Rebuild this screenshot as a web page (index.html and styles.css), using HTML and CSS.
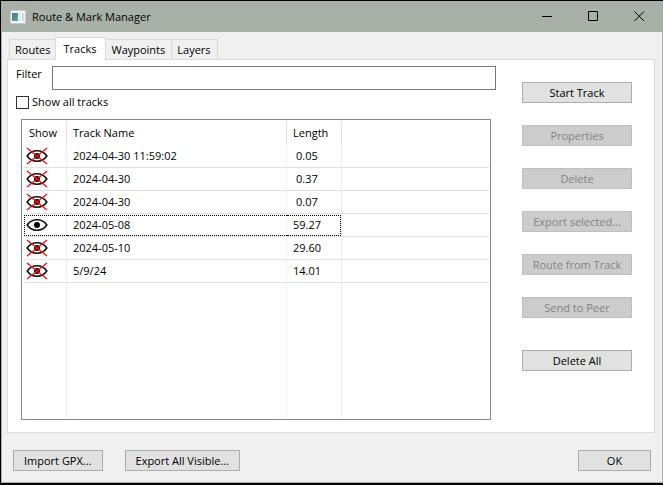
FILE: index.html
```html
<!DOCTYPE html>
<html lang="en">
<head>
<meta charset="utf-8">
<title>Route &amp; Mark Manager</title>
<link rel="stylesheet" href="styles.css">
</head>
<body>
<svg class="defs" aria-hidden="true">
  <symbol id="eye" viewBox="0 0 22 18">
    <path d="M1.2 9C3.5 5.6 7 3.8 11 3.8S18.500 5.600 20.800 9C18.500 12.400 15 14.200 11 14.200S3.500 12.400 1.200 9Z" fill="#fff" stroke="#111" stroke-width="1.6"/>
    <circle cx="11" cy="9" r="3" fill="#000"/>
  </symbol>
  <symbol id="eye-off" viewBox="0 0 22 18">
    <use href="#eye"/>
    <path d="M1 1L21 17M21 1L1 17" fill="none" stroke="#fa1010" stroke-width="1.400"/>
  </symbol>
</svg>
<div class="window">
  <header class="titlebar">
    <svg class="app-icon" width="16" height="14" viewBox="0 0 16 14" aria-hidden="true">
      <defs>
        <linearGradient id="screen" x1="0" y1="0" x2="1" y2="1">
          <stop offset="0" stop-color="#3f74a8"/>
          <stop offset="1" stop-color="#5fae7c"/>
        </linearGradient>
      </defs>
      <rect x="0.500" y="0.500" width="15" height="13" rx="1" fill="#f4f6f6" stroke="#c3c9cc"/>
      <rect x="2" y="3" width="6" height="8" fill="url(#screen)"/>
      <rect x="9" y="3" width="2" height="8" fill="#dfe5e8"/>
      <rect x="12" y="3" width="2" height="8" fill="#d0d7db"/>
    </svg>
    <h1>Route &amp; Mark Manager</h1>
    <div class="caption-buttons">
      <button type="button" aria-label="Minimize"><svg width="11" height="11" viewBox="0 0 11 11"><path d="M0 5.500H10"/></svg></button>
      <button type="button" aria-label="Maximize"><svg width="11" height="11" viewBox="0 0 11 11"><path d="M.5 .5H9.500V9.500H.5Z"/></svg></button>
      <button type="button" aria-label="Close"><svg width="11" height="11" viewBox="0 0 11 11"><path d="M.5 .5L10 10M10 .5L.5 10"/></svg></button>
    </div>
  </header>
  <main class="content">
    <div class="tabs" role="tablist">
      <button type="button" role="tab" class="tab">Routes</button>
      <button type="button" role="tab" class="tab active" aria-selected="true">Tracks</button>
      <button type="button" role="tab" class="tab">Waypoints</button>
      <button type="button" role="tab" class="tab">Layers</button>
    </div>
    <section class="panel" role="tabpanel">
      <div class="tracks">
        <div class="filter">
          <label for="filter">Filter</label>
          <input type="text" id="filter">
        </div>
        <div class="show-all">
          <input type="checkbox" id="show-all">
          <label for="show-all">Show all tracks</label>
        </div>
        <div class="list">
          <table>
            <colgroup><col class="c-show"><col class="c-name"><col class="c-length"><col></colgroup>
            <thead><tr><th>Show</th><th>Track Name</th><th>Length</th><td></td></tr></thead>
            <tbody>
              <tr><td><svg class="eye"><use href="#eye-off"/></svg></td><td>2024-04-30 11:59:02</td><td class="short">0.05</td><td></td></tr>
              <tr><td><svg class="eye"><use href="#eye-off"/></svg></td><td>2024-04-30</td><td class="short">0.37</td><td></td></tr>
              <tr><td><svg class="eye"><use href="#eye-off"/></svg></td><td>2024-04-30</td><td class="short">0.07</td><td></td></tr>
              <tr class="focused"><td><svg class="eye"><use href="#eye"/></svg></td><td>2024-05-08</td><td>59.27</td><td></td></tr>
              <tr><td><svg class="eye"><use href="#eye-off"/></svg></td><td>2024-05-10</td><td>29.60</td><td></td></tr>
              <tr><td><svg class="eye"><use href="#eye-off"/></svg></td><td>5/9/24</td><td>14.01</td><td></td></tr>
              <tr class="filler"><td></td><td></td><td></td><td></td></tr>
            </tbody>
          </table>
        </div>
      </div>
      <div class="actions">
        <button type="button" class="btn">Start Track</button>
        <button type="button" class="btn" disabled>Properties</button>
        <button type="button" class="btn" disabled>Delete</button>
        <button type="button" class="btn" disabled>Export selected...</button>
        <button type="button" class="btn" disabled>Route from Track</button>
        <button type="button" class="btn" disabled>Send to Peer</button>
        <button type="button" class="btn delete-all">Delete All</button>
      </div>
    </section>
    <footer class="footer">
      <button type="button" class="btn">Import GPX...</button>
      <button type="button" class="btn">Export All Visible...</button>
      <button type="button" class="btn ok">OK</button>
    </footer>
  </main>
</div>
</body>
</html>
```
FILE: styles.css
```css
* { box-sizing: border-box; }

body {
  margin: 0;
  padding: 1px 0 2px 1px;
  min-height: 100vh;
  display: flex;
  background: #000;
  color: #000;
  font: 11px/16px "Open Sans", "Noto Sans", sans-serif;
}

button, input { font: inherit; color: inherit; }

.defs { position: absolute; width: 0; height: 0; }

.window {
  flex: 1;
  display: flex;
  flex-direction: column;
  background: #f0f0f0;
  border: solid #a9b0a8;
  border-width: 0 1px 1px;
}

.titlebar {
  display: flex;
  align-items: center;
  height: 31px;
  padding-left: 8px;
  background: #a9b0a8;
}

.titlebar h1 {
  margin: 0 0 0 6px;
  font-size: 11px;
  font-weight: 400;
}

.caption-buttons { display: flex; margin-left: auto; }

.caption-buttons button {
  display: flex;
  align-items: center;
  justify-content: center;
  width: 46px;
  height: 31px;
  padding: 0;
  border: 0;
  background: none;
}

.caption-buttons path { fill: none; stroke: #000; }

.content {
  flex: 1;
  display: flex;
  flex-direction: column;
  padding: 5px 7px 11px 5px;
}

.tabs {
  display: flex;
  align-items: flex-end;
  padding-left: 2px;
  margin-bottom: -1px;
}

.tab {
  height: 21px;
  padding: 0 5px;
  border: 1px solid #d9d9d9;
  background: #f0f0f0;
  line-height: 19px;
}

.tab + .tab { padding: 0 6px 0 5px; border-left: 0; }

.tab.active,
.tab + .tab.active {
  position: relative;
  height: 23px;
  margin-left: -2px;
  padding: 0 9px 2px 8px;
  border-left: 1px solid #d9d9d9;
  border-bottom: 0;
  background: #fff;
}

.panel {
  flex: 1;
  display: flex;
  padding: 6px 22px 12px 8px;
  border: 1px solid #dcdcdc;
  background: #fff;
}

.tracks {
  flex: 1;
  display: flex;
  flex-direction: column;
}

.filter { display: flex; }

.filter label { width: 36px; }

.filter input {
  flex: 1;
  min-width: 0;
  height: 24px;
  padding: 0 4px;
  border: 1px solid #7a7a7a;
  border-radius: 0;
  background: #fff;
}

.show-all {
  display: flex;
  align-items: center;
  gap: 3px;
  padding: 4px 0 9px;
}

.show-all input {
  appearance: none;
  width: 13px;
  height: 13px;
  margin: 0;
  border: 1px solid #333;
  background: #fff;
}

.list {
  flex: 1;
  display: grid;
  margin: 0 5px;
  padding: 1px 1px 2px;
  border: 1px solid #828790;
}

table {
  width: 100%;
  height: 100%;
  table-layout: fixed;
  border-collapse: separate;
  border-spacing: 0;
}

.c-show { width: 44px; }
.c-name { width: 220px; }
.c-length { width: 55px; }

th, td {
  position: relative;
  height: 23px;
  padding: 0 0 0 6px;
  border-right: 1px solid #e8f0fc;
  border-bottom: 1px solid #e2e2e2;
  font-weight: 400;
  text-align: left;
  vertical-align: middle;
}

thead th {
  height: 24px;
  border-right-color: #e2e2e2;
  border-bottom: 0;
}

thead td { border-bottom: 0; }

tr > :last-child { border-right: 0; }

td:first-child { padding-left: 3px; }

td.short { padding-left: 9px; }

.filler td { height: auto; border-bottom: 0; }

.eye { display: block; width: 22px; height: 18px; }

.focused td:not(:last-child)::after {
  content: "";
  position: absolute;
  inset: 1px -1px 0 0;
  border: dotted #000;
  border-width: 1px 0;
}

.focused td:first-child::after { left: 1px; border-left-width: 1px; }

.focused td:nth-child(3)::after { right: 0; border-right-width: 1px; }

.actions {
  display: flex;
  flex-direction: column;
  gap: 22px;
  width: 110px;
  margin-left: 26px;
  padding-top: 16px;
}

.btn {
  height: 21px;
  padding: 0 8px;
  border: 1px solid #adadad;
  background: #e1e1e1;
  line-height: 19px;
  white-space: nowrap;
}

.btn:disabled {
  border-color: #bfbfbf;
  background: #ccc;
  color: #838383;
}

.delete-all { margin-top: 10px; }

.footer {
  display: flex;
  gap: 22px;
  padding: 17px 4px 0 6px;
}

.footer .btn { padding: 0 10px; }

.footer .ok { width: 73px; margin-left: auto; }
```
